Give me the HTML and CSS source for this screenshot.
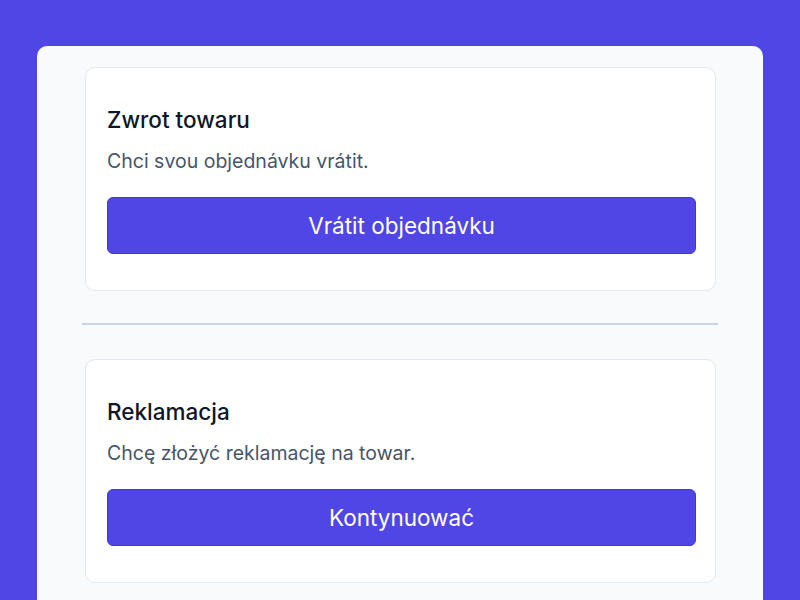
FILE: index.html
```html
<!doctype html>
<html>
  <head>
    <title>Vrácení zboží</title>
    <link rel="stylesheet" href="styles.css">
  </head>
  <body>
    <main class="panel">
      <!-- Return -->
      <section class="card">
        <h2 class="card-title">Zwrot towaru</h2>
        <p class="card-text">Chci svou objednávku vrátit.</p>
        <button class="card-button" type="button">Vrátit objednávku</button>
      </section>

      <hr class="divider">

      <!-- Complaint -->
      <section class="card">
        <h2 class="card-title">Reklamacja</h2>
        <p class="card-text">Chcę złożyć reklamację na towar.</p>
        <button class="card-button" type="button">Kontynuować</button>
      </section>
    </main>
  </body>
</html>
```

FILE: styles.css
```css
body {
  margin: 0;
  padding: 46px 37px 0;
  background-color: #4f46e5;
  font-family: Inter, "Noto Sans", sans-serif;
}

.panel {
  padding: 21px 45px 40px;
  background-color: #f8fafc;
  border-radius: 10px 10px 0 0;
}

.card {
  margin: 0 2px 0 3px;
  padding: 38px 19px 36px 21px;
  background-color: #fff;
  border: 1px solid #e2e8f0;
  border-radius: 10px;
}

.card-title {
  margin: 0;
  font-size: 22.5px;
  line-height: 28px;
  font-weight: 500;
  color: #0f172a;
}

.card-text {
  margin: 13px 0 0;
  font-size: 19.5px;
  line-height: 28px;
  color: #475569;
}

.card-button {
  display: block;
  width: 100%;
  height: 57px;
  margin-top: 22px;
  border: 1px solid #4338ca;
  border-radius: 6px;
  background-color: #4f46e5;
  color: #fff;
  font-family: inherit;
  font-size: 22.5px;
  cursor: pointer;
}

.divider {
  margin: 32px 0 34px;
  border: 0;
  border-top: 2px solid #cbd5e1;
}
```
